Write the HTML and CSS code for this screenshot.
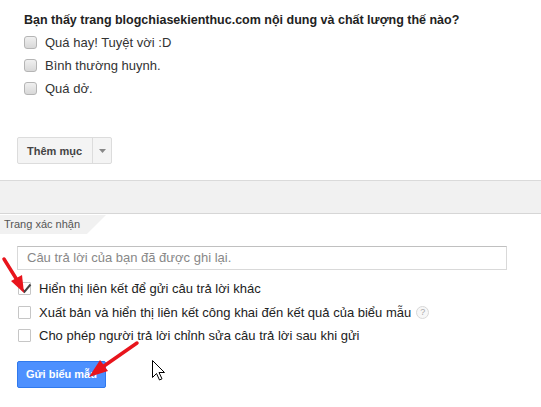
FILE: index.html
```html
<!DOCTYPE html>
<html lang="vi">
<head>
<meta charset="utf-8">
<link rel="stylesheet" href="styles.css">
</head>
<body>
<div class="page">
  <section class="question">
    <div class="q-title">Bạn thấy trang blogchiasekienthuc.com nội dung và chất lượng thế nào?</div>
    <div class="opt"><span class="cb-gray"></span><span>Quá hay! Tuyệt vời :D</span></div>
    <div class="opt"><span class="cb-gray"></span><span>Bình thường huynh.</span></div>
    <div class="opt"><span class="cb-gray"></span><span>Quá dở.</span></div>
    <div class="add-btn">
      <span class="add-label">Thêm mục</span>
      <span class="add-drop"><svg width="7" height="4" viewBox="0 0 7 4"><path d="M0 0h7L3.5 4z" fill="#888"/></svg></span>
    </div>
  </section>
  <div class="band"></div>
  <div class="tab-row"><span class="tab">Trang xác nhận</span></div>
  <section class="confirm">
    <div class="input">Câu trả lời của bạn đã được ghi lại.</div>
    <div class="copt"><span class="cb checked"><svg width="13" height="13" viewBox="0 0 13 13"><path d="M2.5 6.5l3 3.2L11.5 2.5" fill="none" stroke="#444" stroke-width="2"/></svg></span><span>Hiển thị liên kết để gửi câu trả lời khác</span></div>
    <div class="copt"><span class="cb"></span><span>Xuất bản và hiển thị liên kết công khai đến kết quả của biểu mẫu</span><span class="help">?</span></div>
    <div class="copt"><span class="cb"></span><span>Cho phép người trả lời chỉnh sửa câu trả lời sau khi gửi</span></div>
    <div class="submit">Gửi biểu mẫu</div>
  </section>
  <svg class="overlay" width="541" height="407" viewBox="0 0 541 407">
    <line x1="4" y1="259" x2="17" y2="280" stroke="#e8141c" stroke-width="3.5" stroke-linecap="round"/>
    <polygon points="24,293 11,281 22,275" fill="#e8141c"/>
    <line x1="137" y1="343" x2="104" y2="366" stroke="#e8141c" stroke-width="3.5" stroke-linecap="round"/>
    <polygon points="89,377 100,360 108,371" fill="#e8141c"/>
    <path d="M152.5 360.5v17l4-4 3 6.5 2.5-1.2-3-6.3h5.5z" fill="#fff" stroke="#000" stroke-width="1"/>
  </svg>
</div>
</body>
</html>
```
FILE: styles.css
```css
html, body {
  margin: 0;
  padding: 0;
  background: #fff;
}
.page {
  position: relative;
  width: 541px;
  height: 407px;
  overflow: hidden;
  font-family: "Liberation Sans", Arial, sans-serif;
  color: #222;
}
.question {
  padding: 12px 0 0 24px;
  height: 180px;
  box-sizing: border-box;
}
.q-title {
  font-weight: bold;
  font-size: 12.5px;
  line-height: 16px;
  color: #222;
  height: 19px;
}
.opt {
  display: flex;
  align-items: center;
  height: 23px;
  font-size: 13px;
  color: #333;
}
.cb-gray {
  width: 11px;
  height: 11px;
  border: 1px solid #b5b5b5;
  border-radius: 3px;
  background: linear-gradient(#f0f0f0, #d8d8d8);
  margin-right: 8px;
  flex: none;
}
.add-btn {
  display: inline-flex;
  margin: 37px 0 0 -7px;
  height: 27px;
  border: 1px solid #dcdcdc;
  border-radius: 2px;
  background: #f4f4f4;
  box-sizing: border-box;
}
.add-label {
  display: flex;
  align-items: center;
  padding: 0 10px 0 9px;
  font-size: 11px;
  font-weight: bold;
  color: #444;
  border-right: 1px solid #dcdcdc;
}
.add-drop {
  display: flex;
  align-items: center;
  justify-content: center;
  width: 18px;
}
.band {
  height: 32px;
  background: #f1f1f1;
  border-top: 1px solid #dadada;
  border-bottom: 1px solid #d6d6d6;
}
.tab-row {
  height: 19px;
}
.tab {
  display: inline-block;
  height: 19px;
  line-height: 18px;
  padding: 0 26px 0 4px;
  font-size: 11px;
  color: #555;
  background: #f1f1f1;
  clip-path: polygon(0 0, 100% 0, 82% 100%, 0 100%);
}
.confirm {
  padding: 13px 0 0 17px;
}
.input {
  width: 490px;
  height: 24px;
  box-sizing: border-box;
  border: 1px solid #d9d9d9;
  border-top-color: #c0c0c0;
  padding: 0 9px;
  line-height: 22px;
  font-size: 13px;
  color: #888;
  margin-bottom: 7px;
}
.copt {
  display: flex;
  align-items: center;
  height: 23.5px;
  font-size: 13px;
  color: #222;
  padding-left: 1px;
}
.cb {
  width: 13px;
  height: 13px;
  box-sizing: border-box;
  border: 1px solid #c6c6c6;
  border-radius: 1px;
  background: #fff;
  margin-right: 8px;
  flex: none;
  position: relative;
}
.cb svg {
  position: absolute;
  left: 0;
  top: -1px;
}
.help {
  display: inline-flex;
  align-items: center;
  justify-content: center;
  width: 11px;
  height: 11px;
  margin-left: 5px;
  border: 1px solid #d8d8d8;
  border-radius: 50%;
  font-size: 9px;
  color: #aaa;
  background: #f7f7f7;
}
.submit {
  display: inline-flex;
  align-items: center;
  justify-content: center;
  margin-top: 13px;
  height: 27px;
  padding: 0 8px;
  min-width: 89px;
  box-sizing: border-box;
  white-space: nowrap;
  background: #4d90fe;
  border: 1px solid #3079ed;
  border-radius: 2px;
  color: #fff;
  font-size: 11px;
  font-weight: bold;
}
.overlay {
  position: absolute;
  left: 0;
  top: 0;
  pointer-events: none;
}
```
